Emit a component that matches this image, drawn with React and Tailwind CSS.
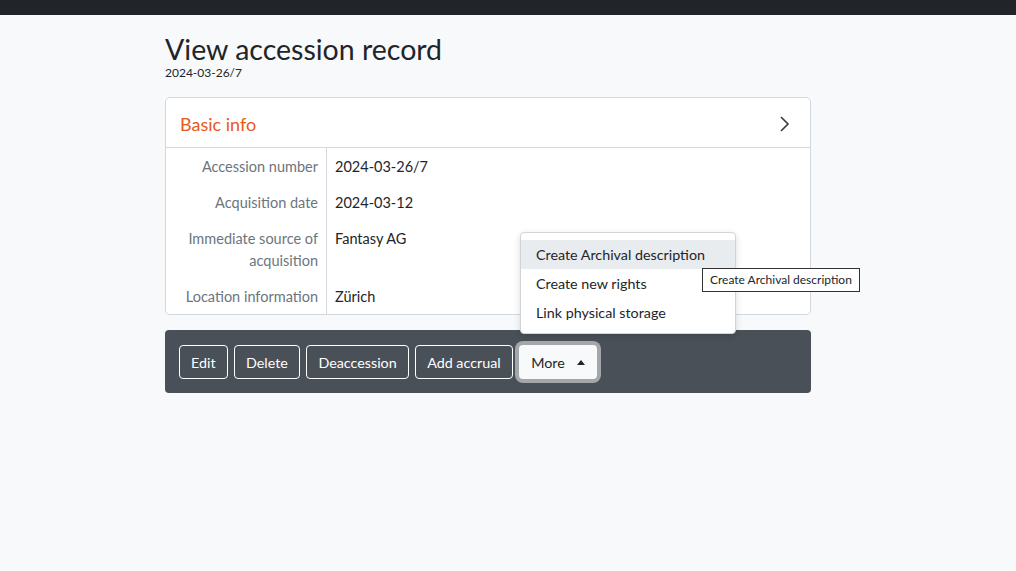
import React from "react";

export default function App() {
  const rows = [
    ["Accession number", "2024-03-26/7"],
    ["Acquisition date", "2024-03-12"],
    ["Immediate source of acquisition", "Fantasy AG"],
    ["Location information", "Zürich"],
  ];
  return (
    <div className="min-h-[571px] bg-[#f8f9fa] text-[#212529] font-['Lato',sans-serif]">
      <div className="h-[15px] bg-[#212529]" />
      <div className="w-[646px] ml-[165px]">
        <h1 className="mt-[17px] text-[28.5px] leading-[34px] font-normal">View accession record</h1>
        <div className="text-[12px] leading-[14px]">2024-03-26/7</div>
        <div className="mt-[17px] bg-white border border-[#d3d8de] rounded-[5px]">
          <div className="h-[50px] flex items-center justify-between px-[14px] border-b border-[#d3d8de]">
            <span className="mt-[3px] text-[18px] text-[#e8591a]">Basic info</span>
            <svg width="14" height="18" viewBox="0 0 14 18" className="mr-[4px] mt-[2px]">
              <path d="M3 2 L10 9 L3 16" fill="none" stroke="#343a40" strokeWidth="1.6" />
            </svg>
          </div>
          <div>
            {rows.map(([k, v]) => (
              <div key={k} className="flex text-[14.5px] leading-[22px]">
                <div className="w-[161px] shrink-0 border-r border-[#d3d8de] text-right text-[#6c757d] pt-[8px] pb-[6px] pr-[8px] pl-[4px]">{k}</div>
                <div className="pt-[8px] pb-[6px] pl-[8px]">{v}</div>
              </div>
            ))}
          </div>
        </div>
        <div className="relative mt-[15px] h-[63px] bg-[#495057] rounded-[4px] flex items-start gap-[6.5px] pl-[14px] pt-[15px]">
          {["Edit", "Delete", "Deaccession", "Add accrual"].map((b) => (
            <button key={b} className="h-[34px] px-[11px] border border-white rounded-[4px] text-white text-[14.3px] leading-[20px] pt-[1px]">{b}</button>
          ))}
          <button className="h-[34px] pl-[12px] pr-[12px] pt-[1px] bg-[#f8f9fa] rounded-[4px] text-[#212529] text-[14.3px] leading-[20px] flex items-center gap-[12px] ring-[4px] ring-[#a4a7aa]">
            More
            <svg width="8" height="5" viewBox="0 0 8 5"><path d="M0 5 L4 0 L8 5 Z" fill="#212529" /></svg>
          </button>
          <div className="absolute left-[355px] top-[-98px] w-[216px] bg-white border border-[#d0d4d8] rounded-[4px] shadow-[0_2px_6px_rgba(0,0,0,0.15)] pt-[7px] pb-[6px] text-[14.3px]">
            <div className="h-[29px] leading-[29px] px-[15px] bg-[#e9ecef]">Create Archival description</div>
            <div className="h-[29px] leading-[29px] px-[15px]">Create new rights</div>
            <div className="h-[29px] leading-[29px] px-[15px]">Link physical storage</div>
          </div>
          <div className="absolute left-[537px] top-[-62px] h-[24px] w-[158px] bg-white border border-[#333] flex items-center px-[7px] text-[12px] whitespace-nowrap">Create Archival description</div>
        </div>
      </div>
    </div>
  );
}
